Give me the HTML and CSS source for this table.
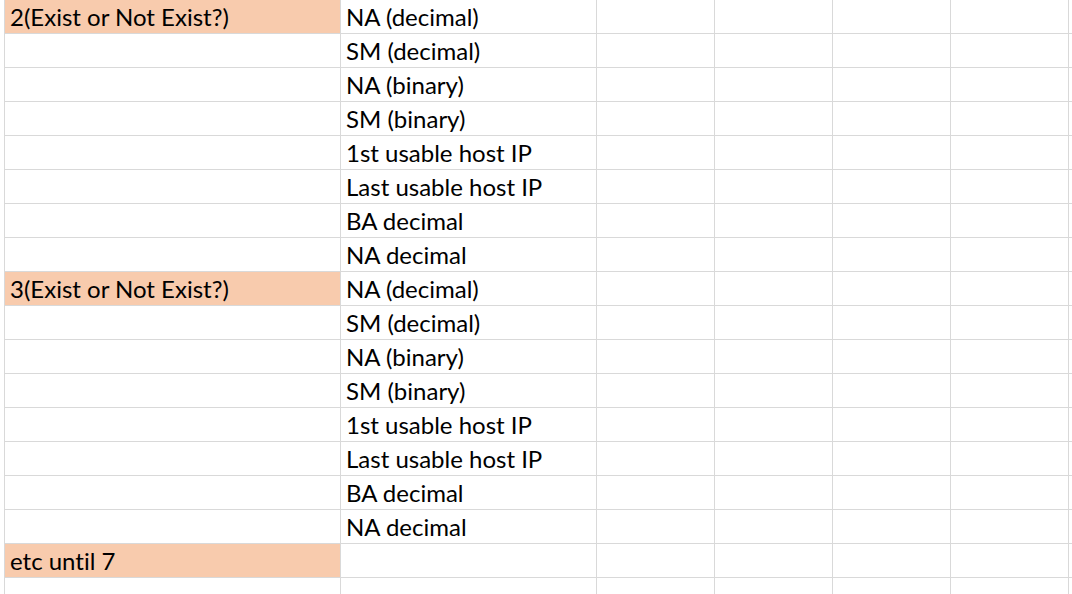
FILE: index.html
```html
<!DOCTYPE html>
<html>
<head>
<meta charset="utf-8">
<link rel="stylesheet" href="styles.css">
</head>
<body>
<div class="sheet">
  <div class="c fill">2(Exist or Not Exist?)</div><div class="c">NA (decimal)</div><div class="c"></div><div class="c"></div><div class="c"></div><div class="c"></div><div class="c"></div>
  <div class="c"></div><div class="c">SM (decimal)</div><div class="c"></div><div class="c"></div><div class="c"></div><div class="c"></div><div class="c"></div>
  <div class="c"></div><div class="c">NA (binary)</div><div class="c"></div><div class="c"></div><div class="c"></div><div class="c"></div><div class="c"></div>
  <div class="c"></div><div class="c">SM (binary)</div><div class="c"></div><div class="c"></div><div class="c"></div><div class="c"></div><div class="c"></div>
  <div class="c"></div><div class="c">1st usable host IP</div><div class="c"></div><div class="c"></div><div class="c"></div><div class="c"></div><div class="c"></div>
  <div class="c"></div><div class="c">Last usable host IP</div><div class="c"></div><div class="c"></div><div class="c"></div><div class="c"></div><div class="c"></div>
  <div class="c"></div><div class="c">BA decimal</div><div class="c"></div><div class="c"></div><div class="c"></div><div class="c"></div><div class="c"></div>
  <div class="c"></div><div class="c">NA decimal</div><div class="c"></div><div class="c"></div><div class="c"></div><div class="c"></div><div class="c"></div>
  <div class="c fill">3(Exist or Not Exist?)</div><div class="c">NA (decimal)</div><div class="c"></div><div class="c"></div><div class="c"></div><div class="c"></div><div class="c"></div>
  <div class="c"></div><div class="c">SM (decimal)</div><div class="c"></div><div class="c"></div><div class="c"></div><div class="c"></div><div class="c"></div>
  <div class="c"></div><div class="c">NA (binary)</div><div class="c"></div><div class="c"></div><div class="c"></div><div class="c"></div><div class="c"></div>
  <div class="c"></div><div class="c">SM (binary)</div><div class="c"></div><div class="c"></div><div class="c"></div><div class="c"></div><div class="c"></div>
  <div class="c"></div><div class="c">1st usable host IP</div><div class="c"></div><div class="c"></div><div class="c"></div><div class="c"></div><div class="c"></div>
  <div class="c"></div><div class="c">Last usable host IP</div><div class="c"></div><div class="c"></div><div class="c"></div><div class="c"></div><div class="c"></div>
  <div class="c"></div><div class="c">BA decimal</div><div class="c"></div><div class="c"></div><div class="c"></div><div class="c"></div><div class="c"></div>
  <div class="c"></div><div class="c">NA decimal</div><div class="c"></div><div class="c"></div><div class="c"></div><div class="c"></div><div class="c"></div>
  <div class="c fill">etc until 7</div><div class="c"></div><div class="c"></div><div class="c"></div><div class="c"></div><div class="c"></div><div class="c"></div>
  <div class="c"></div><div class="c"></div><div class="c"></div><div class="c"></div><div class="c"></div><div class="c"></div><div class="c"></div>
</div>
</body>
</html>
```

FILE: styles.css
```css
html, body {
  margin: 0;
  padding: 0;
  background: #ffffff;
  overflow: hidden;
}

.sheet {
  display: grid;
  grid-template-columns: 336px 256px 118px 118px 118px 118px 3px;
  grid-auto-rows: 34px;
  margin-left: 4px;
  border-left: 1px solid #d9d9d9;
  width: max-content;
  font-family: Lato, "Open Sans", sans-serif;
  font-size: 24px;
  font-variant-ligatures: none;
  color: #000000;
}

.c {
  box-sizing: border-box;
  border-right: 1px solid #d9d9d9;
  border-bottom: 1px solid #d9d9d9;
  padding: 0 0 0 5px;
  line-height: 33px;
  white-space: nowrap;
  overflow: hidden;
}

.fill {
  background: #f8cbad;
}
```
